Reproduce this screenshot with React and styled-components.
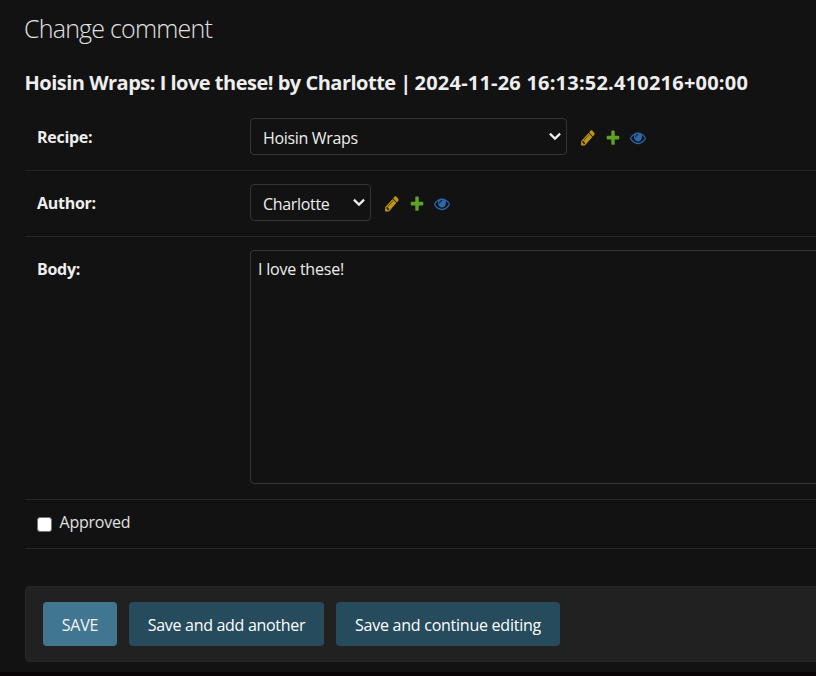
import React from "react";
import styled, { createGlobalStyle } from "styled-components";

const GlobalStyle = createGlobalStyle`
  *, *::before, *::after { box-sizing: border-box; }
  body {
    margin: 0;
    overflow: hidden;
    background: #121212;
    color: #eeeeee;
    font-family: "Open Sans", "Noto Sans", sans-serif;
    font-size: 16px;
    line-height: 22px;
  }
`;

const Page = styled.main`
  height: 676px;
  padding-left: 25px;
  overflow: hidden;
  border-bottom: 4px solid #0a0407;
`;

const Title = styled.h1`
  margin: 0 0 0 -1px;
  padding-top: 12px;
  height: 67px;
  font-size: 25px;
  line-height: 32px;
  font-weight: 300;
  letter-spacing: -0.79px;
  color: #e2e2e2;
`;

const Subtitle = styled.h2`
  margin: 0 0 0 -0.5px;
  height: 38px;
  font-size: 20px;
  line-height: 32px;
  font-weight: 700;
  letter-spacing: -0.5px;
  white-space: nowrap;
`;

const Timestamp = styled.span`
  margin-left: -1px;
  letter-spacing: 0.21px;
`;

const FormRow = styled.div`
  display: flex;
  align-items: flex-start;
  height: ${(p) => p.$height}px;
  padding: 13px 0 0 12px;
  border-bottom: 1px solid #252525;
`;

const FieldLabel = styled.label`
  flex: none;
  width: 213px;
  padding-top: 8px;
  font-weight: 700;
  letter-spacing: -0.28px;
`;

const SelectBox = styled.div`
  display: flex;
  align-items: center;
  justify-content: space-between;
  width: ${(p) => p.$width}px;
  height: 37px;
  padding: 3px 5px 0 12px;
  border: 1px solid #353535;
  border-radius: 4px;
  letter-spacing: -0.33px;
`;

const Chevron = styled.svg`
  width: 13px;
  height: 9px;
  margin-bottom: 4px;
`;

const RelatedLinks = styled.div`
  display: flex;
  gap: 9px;
  padding: 11px 0 0 13px;
`;

const LinkIcon = styled.svg`
  width: 16px;
  height: 18px;
  fill: ${(p) => p.$color};
`;

const TextArea = styled.div`
  flex: none;
  width: 610px;
  height: 234px;
  padding: 7px;
  border: 1px solid #353535;
  border-radius: 4px;
  letter-spacing: -0.22px;
`;

const CheckRow = styled.label`
  display: flex;
  align-items: flex-start;
  gap: 7.5px;
  height: 49px;
  padding: 11px 0 0 12px;
  border-bottom: 1px solid #252525;
  color: #e0e0e0;
  letter-spacing: -0.23px;
`;

const Checkbox = styled.span`
  width: 15px;
  height: 15px;
  margin-top: 6px;
  border: 1px solid #767676;
  border-radius: 3px;
  background: #ffffff;
`;

const SubmitRow = styled.div`
  display: flex;
  gap: 12px;
  width: 830px;
  height: 76px;
  margin-top: 37px;
  padding: 15px 17px;
  border: 1px solid #282828;
  border-radius: 4px;
  background: #212121;
`;

const Button = styled.button`
  width: ${(p) => p.$width}px;
  height: 44px;
  padding: 1px 0 0;
  border: 0;
  border-radius: 4px;
  background: ${(p) => (p.$primary ? "#417690" : "#264b5d")};
  color: ${(p) => (p.$primary ? "#f5f5f5" : "#ffffff")};
  font: inherit;
  letter-spacing: ${(p) => p.$tracking}px;
  white-space: nowrap;
`;

function Select({ value, width }) {
  return (
    <SelectBox $width={width}>
      {value}
      <Chevron viewBox="0 0 13 9">
        <path d="M1.9 1.6 7 6.6 12.1 1.6" fill="none" stroke="#eee" strokeWidth="2.2" />
      </Chevron>
    </SelectBox>
  );
}

function Icon({ color, d }) {
  return (
    <LinkIcon viewBox="0 30 1792 1792" preserveAspectRatio="none" $color={color}>
      <path d={d} />
    </LinkIcon>
  );
}

const PENCIL =
  "M491 1536l91-91-235-235-91 91v107h128v128h107zm523-928q0-22-22-22-10 0-17 7l-542 542q-7 7-7 17 0 22 22 22 10 0 17-7l542-542q7-7 7-17zm-54-192l416 416-832 832h-416v-416zm683 96q0 53-37 90l-166 166-416-416 166-165q36-38 90-38 53 0 91 38l235 234q37 39 37 91z";
const PLUS =
  "M1600 796v192q0 40-28 68t-68 28h-416v416q0 40-28 68t-68 28h-192q-40 0-68-28t-28-68v-416h-416q-40 0-68-28t-28-68v-192q0-40 28-68t68-28h416v-416q0-40 28-68t68-28h192q40 0 68 28t28 68v416h416q40 0 68 28t28 68z";
const EYE =
  "M1664 960q-152-236-381-353 61 104 61 225 0 185-131.5 316.5t-316.5 131.5-316.5-131.5-131.5-316.5q0-121 61-225-229 117-381 353 133 205 333.5 326.5t434.5 121.5 434.5-121.5 333.5-326.5zm-720-384q0-20-14-34t-34-14q-125 0-214.5 89.5t-89.5 214.5q0 20 14 34t34 14 34-14 14-34q0-86 61-147t147-61q20 0 34-14t14-34zm848 384q0 34-20 69-140 230-376.5 368.5t-499.5 138.5-499.5-139-376.5-368q-20-35-20-69t20-69q140-229 376.5-368t499.5-139 499.5 139 376.5 368q20 35 20 69z";

function Links() {
  return (
    <RelatedLinks>
      <Icon color="#c1980c" d={PENCIL} />
      <Icon color="#5fa225" d={PLUS} />
      <Icon color="#2b67a9" d={EYE} />
    </RelatedLinks>
  );
}

export default function App() {
  return (
    <>
      <GlobalStyle />
      <Page>
        <Title>Change comment</Title>
        <Subtitle>
          Hoisin Wraps: I love these! by Charlotte |{" "}
          <Timestamp>2024-11-26 16:13:52.410216+00:00</Timestamp>
        </Subtitle>
        <FormRow $height={66}>
          <FieldLabel>Recipe:</FieldLabel>
          <Select value="Hoisin Wraps" width={317} />
          <Links />
        </FormRow>
        <FormRow $height={66}>
          <FieldLabel>Author:</FieldLabel>
          <Select value="Charlotte" width={121} />
          <Links />
        </FormRow>
        <FormRow $height={263}>
          <FieldLabel>Body:</FieldLabel>
          <TextArea>I love these!</TextArea>
        </FormRow>
        <CheckRow>
          <Checkbox />
          Approved
        </CheckRow>
        <SubmitRow>
          <Button $primary $width={74} $tracking={-0.15}>SAVE</Button>
          <Button $width={195} $tracking={-0.3}>Save and add another</Button>
          <Button $width={224} $tracking={-0.25}>Save and continue editing</Button>
        </SubmitRow>
      </Page>
    </>
  );
}
